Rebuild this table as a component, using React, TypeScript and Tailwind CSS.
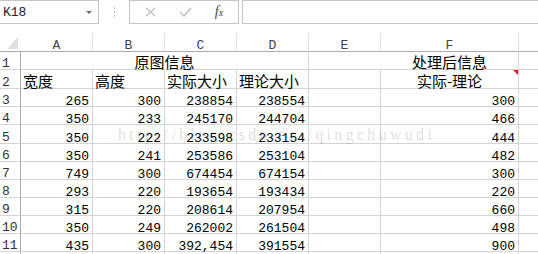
import React from "react";

const COLS = "grid grid-cols-[21px_72px_72px_72px_72px_72px_138px_1fr]";
const MONO = "font-['Liberation_Mono',monospace]";
const CJK = "font-['Noto_Sans_CJK_SC',sans-serif]";

const data: (number | string)[][] = [
  [265, 300, 238854, 238554, 300],
  [350, 233, 245170, 244704, 466],
  [350, 222, 233598, 233154, 444],
  [350, 241, 253586, 253104, 482],
  [749, 300, 674454, 674154, 300],
  [293, 220, 193654, 193434, 220],
  [315, 220, 208614, 207954, 660],
  [350, 249, 262002, 261504, 498],
  [435, 300, "392,454", 391554, 900],
];

// row heights include the 1px bottom grid line
const dataHeights = [
  "h-[18px]",
  "h-[18px]",
  "h-[19px]",
  "h-[18px]",
  "h-[18px]",
  "h-[18px]",
  "h-[18px]",
  "h-[18px]",
  "h-[18px]",
];

function RowHead({ n }: { n?: number }) {
  return (
    <div
      className={`flex items-end pl-[2px] border-r border-r-[#ababab] border-b border-b-[#d4d4d4] text-[13px] leading-none text-[#333] ${MONO}`}
    >
      {n !== undefined && <span className="mb-[-1px]">{n}</span>}
    </div>
  );
}

function Num({ v }: { v: number | string }) {
  return (
    <div
      className={`flex items-end justify-end pr-[3px] border-r border-b border-[#d4d4d4] text-[13px] leading-none text-black ${MONO}`}
    >
      <span className="mb-[-2px]">{v}</span>
    </div>
  );
}

function Cn({ t, center, comment }: { t: string; center?: boolean; comment?: boolean }) {
  return (
    <div
      className={`relative flex items-end px-[2px] border-r border-b border-[#d4d4d4] text-[15px] leading-none text-black ${CJK} ${
        center ? "justify-center" : ""
      }`}
    >
      <span>{t}</span>
      {comment && (
        <span className="absolute top-0 right-0 w-0 h-0 border-l-[5px] border-l-transparent border-t-[5px] border-t-[#e81123]" />
      )}
    </div>
  );
}

function Empty() {
  return <div className="border-r border-b border-[#d4d4d4]" />;
}

function Toolbar() {
  return (
    <div className="flex h-[24px]">
      <div className="flex w-[99px] items-center justify-between border-y border-r border-[#c6c6c6] pl-[3px] pr-[6px]">
        <span className={`text-[13px] leading-none text-[#222] ${MONO}`}>K18</span>
        <span className="w-0 h-0 border-x-[3px] border-x-transparent border-t-[3px] border-t-[#6a6a6a]" />
      </div>
      <div className="flex w-[30px] flex-col items-center justify-center gap-[2px]">
        <span className="w-[1px] h-[2px] bg-[#b5b5b5]" />
        <span className="w-[1px] h-[2px] bg-[#b5b5b5]" />
        <span className="w-[1px] h-[2px] bg-[#b5b5b5]" />
      </div>
      <div className="flex w-[110px] items-center border border-[#c6c6c6]">
        <div className="flex w-[38px] justify-center pl-[2px]">
          <svg width="11" height="10" viewBox="0 0 11 10">
            <path d="M1 1 L10 9 M10 1 L1 9" stroke="#bdbdbd" strokeWidth="1.2" fill="none" />
          </svg>
        </div>
        <div className="flex w-[34px] justify-center">
          <svg width="13" height="10" viewBox="0 0 13 10">
            <path d="M1 5 L5 9 L12 1" stroke="#bdbdbd" strokeWidth="1.4" fill="none" />
          </svg>
        </div>
        <div className="flex flex-1 justify-center pr-[2px]">
          <span className="font-['Liberation_Serif',serif] italic text-[14px] leading-none text-[#444]">
            f<span className="text-[10px]">x</span>
          </span>
        </div>
      </div>
      <div className="ml-[3px] flex-1 border-y border-l border-[#c6c6c6]" />
    </div>
  );
}

function ColumnHeader() {
  const letters = ["A", "B", "C", "D", "E", "F", ""];
  return (
    <div className={`${COLS} h-[19px]`}>
      <div className="relative border-b border-[#ababab]">
        <span className="absolute right-[3px] bottom-[2px] w-0 h-0 border-l-[11px] border-l-transparent border-b-[12px] border-b-[#dfdfdf]" />
      </div>
      {letters.map((l, i) => (
        <div
          key={i}
          className={`flex items-end justify-center border-b border-b-[#ababab] ${
            i < 6 ? "border-r border-r-[#e1e1e1]" : ""
          } text-[13px] leading-none text-[#444] ${MONO}`}
        >
          <span className="mb-[-1px]">{l}</span>
        </div>
      ))}
    </div>
  );
}

export default function App() {
  return (
    <div className="relative h-[254px] w-[538px] overflow-hidden bg-white">
      <Toolbar />
      <div className="h-[9px]" />
      <ColumnHeader />

      {/* row 1: merged titles */}
      <div className={`${COLS} h-[18px]`}>
        <RowHead n={1} />
        <div
          className={`col-span-4 flex items-end justify-center border-r border-b border-[#d4d4d4] text-[15px] leading-none text-black ${CJK}`}
        >
          原图信息
        </div>
        <div
          className={`col-span-2 flex items-end justify-center pl-[72px] border-r border-b border-[#d4d4d4] text-[15px] leading-none text-black ${CJK}`}
        >
          处理后信息
        </div>
        <div className="border-b border-[#d4d4d4]" />
      </div>

      {/* row 2: column titles */}
      <div className={`${COLS} h-[19px]`}>
        <RowHead n={2} />
        <Cn t="宽度" />
        <Cn t="高度" />
        <Cn t="实际大小" />
        <Cn t="理论大小" />
        <Empty />
        <Cn t="实际-理论" center comment />
        <div className="border-b border-[#d4d4d4]" />
      </div>

      {data.map((r, i) => (
        <div key={i} className={`${COLS} ${dataHeights[i]}`}>
          <RowHead n={i + 3} />
          <Num v={r[0]} />
          <Num v={r[1]} />
          <Num v={r[2]} />
          <Num v={r[3]} />
          <Empty />
          <Num v={r[4]} />
          <div className="border-b border-[#d4d4d4]" />
        </div>
      ))}

      {/* row 12, only its top edge shows */}
      <div className={`${COLS} h-[18px]`}>
        <RowHead />
        <Empty />
        <Empty />
        <Empty />
        <Empty />
        <Empty />
        <Empty />
        <div />
      </div>

      {/* watermark */}
      <div className="pointer-events-none absolute left-[118px] top-[127px] whitespace-nowrap font-['Liberation_Serif',serif] text-[16px] leading-none tracking-[3.3px] text-black/15">
        http://blog.csdn.net/qingchuwudi
      </div>
    </div>
  );
}
